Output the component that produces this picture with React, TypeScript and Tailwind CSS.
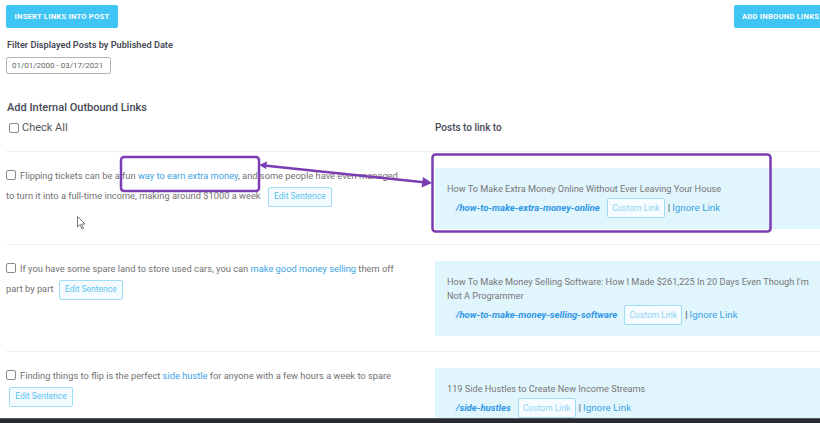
import React from "react";

const font = { fontFamily: "Roboto, 'Liberation Sans', sans-serif" };

function EditBtn({ className = "" }: { className?: string }) {
  return (
    <span
      className={
        "inline-flex h-[20px] w-[64px] items-center justify-center rounded-[2px] border border-[#9fdcf6] bg-[#f4fbff] align-middle text-[8.5px] leading-none text-[#5ec3ef] " +
        className
      }
    >
      Edit Sentence
    </span>
  );
}

function Box({ title, slug }: { title: React.ReactNode; slug: string }) {
  return (
    <div className="relative flex w-full flex-col bg-[#e1f5fd] pb-[11px] pl-[12px] pr-[14px] pt-[14px]">
      <div className="text-[9.2px] leading-[14px] text-[#787878]">{title}</div>
      <div className="mt-[2px] flex h-[20px] items-center pl-[9px]">
        <span className="text-[9.5px] font-bold italic text-[#2f97e8]">{slug}</span>
        <span className="ml-[7px] flex h-[20px] w-[58px] items-center justify-center rounded-[2px] border border-[#9fdcf6] bg-[#f6fcff] text-[8.5px] text-[#8fd3f4]">
          Custom Link
        </span>
        <span className="ml-[3px] text-[9.5px] text-[#444]">|</span>
        <span className="ml-[2px] text-[9.8px] text-[#3ba3e3]">Ignore Link</span>
      </div>
      <div className="absolute right-[-4px] top-1/2 -mt-[3px] h-0 w-0 border-l-[4.5px] border-r-[4.5px] border-t-[6px] border-l-transparent border-r-transparent border-t-[#2f97e8]" />
    </div>
  );
}

function Row({
  left,
  title,
  slug,
}: {
  left: React.ReactNode;
  title: React.ReactNode;
  slug: string;
}) {
  return (
    <div className="flex border-t border-[#efefef] pb-[15px]">
      <div className="w-[429px] shrink-0 pr-[10px] pt-[14px]">
        <div className="text-[9.3px] leading-[20px] text-[#727272]">{left}</div>
      </div>
      <div className="flex-1 pt-[16px]">
        <Box title={title} slug={slug} />
      </div>
    </div>
  );
}

function Cb() {
  return (
    <span className="mr-[4px] inline-block h-[10px] w-[10px] rounded-[2px] border border-[#8a8a8a] bg-white align-[-1px]" />
  );
}

const Link = ({ children }: { children: React.ReactNode }) => (
  <span className="text-[#3ba3e3]">{children}</span>
);

export default function App() {
  return (
    <div className="relative h-[423px] w-[820px] overflow-hidden bg-white" style={font}>
      <div className="w-[834px] pl-[6px]">
        <div className="flex justify-between pt-[5px]">
          <div className="flex h-[23px] w-[112px] items-center justify-center rounded-[2px] bg-[#3ec5f4] text-[7.7px] font-bold tracking-[0.2px] text-white">
            INSERT LINKS INTO POST
          </div>
          <div className="flex h-[23px] w-[100px] items-center rounded-[2px] bg-[#3ec5f4] pl-[8px] text-[7.7px] font-bold tracking-[0.2px] text-white">
            ADD INBOUND LINKS
          </div>
        </div>
        <div className="mt-[11px] pl-[1px] text-[9.2px] font-semibold leading-[12px] text-[#454a55]">
          Filter Displayed Posts by Published Date
        </div>
        <div className="mt-[6px] flex h-[17px] w-[105px] items-center rounded-[2px] border border-[#b5b5b5] pl-[5px] text-[8px] text-[#666]">
          01/01/2000 - 03/17/2021
        </div>
        <div className="flex items-end">
          <div className="w-[429px] shrink-0 pl-[1px]">
            <div className="mt-[27px] text-[11px] font-medium leading-[14px] text-[#454a55]">
              Add Internal Outbound Links
            </div>
            <div className="mt-[6px] flex items-center pl-[2px] text-[11px] leading-[14px] text-[#555]">
              <span className="mr-[3px] inline-block h-[10px] w-[10px] rounded-[2px] border border-[#8a8a8a] bg-white" />
              Check All
            </div>
          </div>
          <div className="text-[10px] font-medium leading-[14px] text-[#454a55]">Posts to link to</div>
        </div>
        <div className="mt-[16px]">
          <Row
            left={
              <>
                <Cb />
                Flipping tickets can be a fun <Link>way to earn extra money</Link>, and some people have even managed
                <br />
                to turn it into a full-time income, making around $1000 a week <EditBtn className="ml-[5px]" />
              </>
            }
            title="How To Make Extra Money Online Without Ever Leaving Your House"
            slug="/how-to-make-extra-money-online"
          />
          <Row
            left={
              <>
                <Cb />
                If you have some spare land to store used cars, you can <Link>make good money selling</Link> them off
                <br />
                part by part <EditBtn className="ml-[3px]" />
              </>
            }
            title="How To Make Money Selling Software: How I Made $261,225 In 20 Days Even Though I'm Not A Programmer"
            slug="/how-to-make-money-selling-software"
          />
          <Row
            left={
              <>
                <Cb />
                Finding things to flip is the perfect <Link>side hustle</Link> for anyone with a few hours a week to spare
                <br />
                <EditBtn className="ml-[3px]" />
              </>
            }
            title="119 Side Hustles to Create New Income Streams"
            slug="/side-hustles"
          />
        </div>
      </div>

      {/* annotations overlay */}
      <svg className="pointer-events-none absolute left-0 top-0" width="820" height="423" viewBox="0 0 820 423">
        <rect x="121" y="157" width="138" height="34" rx="3" fill="none" stroke="#7a3db3" strokeWidth="2.5" />
        <rect x="432.5" y="154.5" width="338" height="77" rx="3" fill="none" stroke="#7a3db3" strokeWidth="2.5" />
        <line x1="264" y1="165.5" x2="426" y2="182.5" stroke="#7a3db3" strokeWidth="2.5" />
        <path d="M259 165 L267 161.5 L266 169 Z" fill="#7a3db3" />
        <path d="M432 183 L423 177 L421.5 187.5 Z" fill="#7a3db3" />
        {/* cursor */}
        <path d="M77.5 216.5 L77.5 227 L80 224.5 L82 229 L83.5 228.3 L81.6 224 L85 224 Z" fill="#fff" stroke="#666" strokeWidth="0.9" strokeLinejoin="round" />
      </svg>

      <div className="absolute bottom-0 left-0 h-[5px] w-full border-t border-[#5a5d62] bg-[#26292d]" />
    </div>
  );
}
